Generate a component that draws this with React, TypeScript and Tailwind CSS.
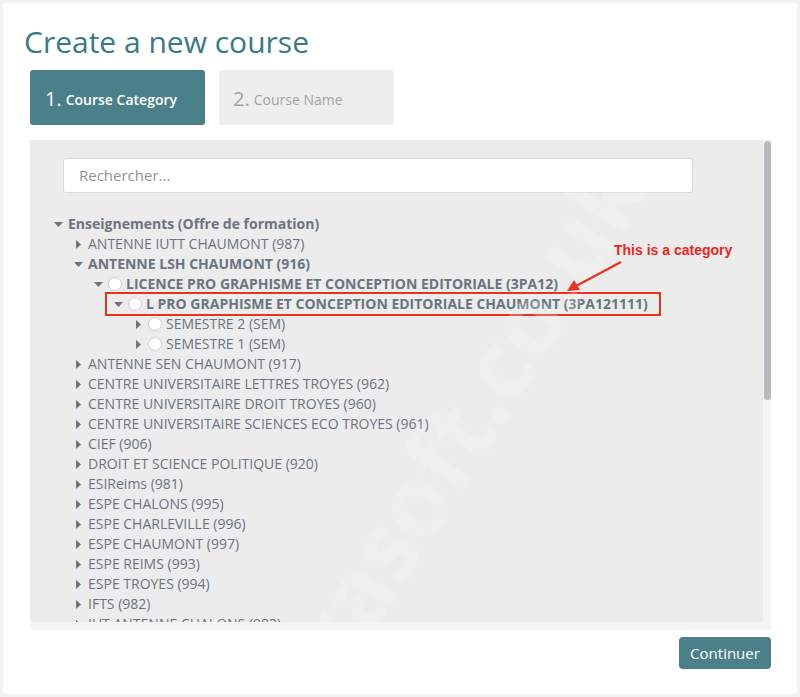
import React from "react";

type Row = {
  level: number;
  open: boolean;
  radio?: boolean;
  bold?: boolean;
  boxed?: boolean;
  label: string;
};

const rows: Row[] = [
  { level: 0, open: true, bold: true, label: "Enseignements (Offre de formation)" },
  { level: 1, open: false, label: "ANTENNE IUTT CHAUMONT (987)" },
  { level: 1, open: true, bold: true, label: "ANTENNE LSH CHAUMONT (916)" },
  { level: 2, open: true, radio: true, bold: true, label: "LICENCE PRO GRAPHISME ET CONCEPTION EDITORIALE (3PA12)" },
  { level: 3, open: true, radio: true, bold: true, boxed: true, label: "L PRO GRAPHISME ET CONCEPTION EDITORIALE CHAUMONT (3PA121111)" },
  { level: 4, open: false, radio: true, label: "SEMESTRE 2 (SEM)" },
  { level: 4, open: false, radio: true, label: "SEMESTRE 1 (SEM)" },
  { level: 1, open: false, label: "ANTENNE SEN CHAUMONT (917)" },
  { level: 1, open: false, label: "CENTRE UNIVERSITAIRE LETTRES TROYES (962)" },
  { level: 1, open: false, label: "CENTRE UNIVERSITAIRE DROIT TROYES (960)" },
  { level: 1, open: false, label: "CENTRE UNIVERSITAIRE SCIENCES ECO TROYES (961)" },
  { level: 1, open: false, label: "CIEF (906)" },
  { level: 1, open: false, label: "DROIT ET SCIENCE POLITIQUE (920)" },
  { level: 1, open: false, label: "ESIReims (981)" },
  { level: 1, open: false, label: "ESPE CHALONS (995)" },
  { level: 1, open: false, label: "ESPE CHARLEVILLE (996)" },
  { level: 1, open: false, label: "ESPE CHAUMONT (997)" },
  { level: 1, open: false, label: "ESPE REIMS (993)" },
  { level: 1, open: false, label: "ESPE TROYES (994)" },
  { level: 1, open: false, label: "IFTS (982)" },
  { level: 1, open: false, label: "IUT ANTENNE CHALONS (983)" },
];

const padClass: Record<number, string> = {
  0: "pl-[22px]",
  1: "pl-[42px]",
  2: "pl-[62px]",
  3: "pl-[82px]",
  4: "pl-[102px]",
};

function Caret({ open }: { open: boolean }) {
  return (
    <span className="w-[12px] h-[20px] flex items-center justify-center shrink-0">
      {open ? (
        <svg width="9" height="5" viewBox="0 0 9 5">
          <path d="M0 0 L9 0 L4.5 5 Z" fill="#6b7480" />
        </svg>
      ) : (
        <svg width="5" height="9" viewBox="0 0 5 9">
          <path d="M0 0 L5 4.5 L0 9 Z" fill="#6b7480" />
        </svg>
      )}
    </span>
  );
}

function TreeRow({ row }: { row: Row }) {
  return (
    <div className={`h-[20px] flex items-center ${padClass[row.level]}`}>
      <span className="relative inline-flex items-center">
        {row.boxed && (
          <span className="absolute left-[-7px] right-[-13px] top-[-2px] bottom-[-2px] border-2 border-[#e8311f]" />
        )}
        <Caret open={row.open} />
        {row.radio && (
          <span className="ml-[4px] w-[14px] h-[14px] rounded-full bg-white border border-[#d0d0d0] shrink-0" />
        )}
        <span
          className={`${row.radio ? "ml-[4px]" : "ml-[4px]"} whitespace-nowrap text-[14px] leading-[20px] text-[#6b7480] ${
            row.bold ? "font-bold" : "font-normal"
          }`}
        >
          {row.label}
        </span>
      </span>
    </div>
  );
}

export default function App() {
  return (
    <div
      className="w-[800px] h-[697px] bg-[#f1f2f4] p-[3px]"
      style={{ fontFamily: '"Open Sans", "Noto Sans", sans-serif' }}
    >
      <div className="w-[794px] h-[691px] bg-white rounded-[3px] flex flex-col pl-[27px] pr-[26px]">
        <h1 className="text-[30px] leading-[36px] font-normal text-[#387a85] mt-[21px] ml-[-6px]">
          Create a new course
        </h1>
        <div className="flex gap-[14px] mt-[10px]">
          <div className="w-[175px] h-[55px] rounded-[3px] bg-[#4b7f8a] flex items-center pl-[15px] pt-[2px] text-white">
            <span className="text-[20px] leading-none">1.</span>
            <span className="text-[14px] leading-none ml-[4px] mt-[2px] font-semibold">Course Category</span>
          </div>
          <div className="w-[175px] h-[55px] rounded-[3px] bg-[#eeeeee] flex items-center pl-[14px] pt-[2px] text-[#a3a3a3]">
            <span className="text-[20px] leading-none">2.</span>
            <span className="text-[14px] leading-none ml-[4px] mt-[2px]">Course Name</span>
          </div>
        </div>

        <div className="mt-[15px] w-[741px] h-[490px] bg-[#f4f4f4] relative overflow-hidden flex">
          <div className="w-[733px] h-[482px] bg-[#ececec] overflow-hidden flex flex-col relative">
            <div className="pl-[33px] pt-[18px]">
              <div className="w-[630px] h-[35px] bg-white border border-[#d9d9d9] rounded-[3px] flex items-center pl-[15px] text-[15px] text-[#8d949c]">
                Rechercher...
              </div>
            </div>
            <div className="mt-[21px] flex flex-col">
              {rows.map((r, i) => (
                <TreeRow key={i} row={r} />
              ))}
            </div>
            <div
              className="absolute left-[60px] top-[250px] text-[96px] font-bold text-white/20 whitespace-nowrap rotate-[-58deg] origin-center pointer-events-none select-none"
              aria-hidden="true"
            >
              parasoft.co.uk
            </div>
            <div
              className="absolute left-[584px] top-[100px] text-[14px] font-bold text-[#e8271b] whitespace-nowrap"
              style={{ fontFamily: '"Liberation Sans", Arial, sans-serif' }}
            >
              This is a category
            </div>
            <svg className="absolute left-[530px] top-[118px]" width="70" height="40" viewBox="0 0 70 40">
              <line x1="61" y1="4" x2="16" y2="28" stroke="#e8311f" strokeWidth="2" />
              <path d="M7 33 L14 22 L20 32 Z" fill="#e8311f" />
            </svg>
          </div>
          <div className="w-[8px] h-[482px] bg-[#f4f4f4] pt-[1px] flex justify-center">
            <div className="w-[7px] h-[259px] rounded-full bg-[#b9babe]" />
          </div>
        </div>

        <div className="flex justify-end mt-[7px]">
          <button className="w-[92px] h-[32px] rounded-[4px] bg-[#4b7f8a] text-white text-[15px] leading-none">
            Continuer
          </button>
        </div>
      </div>
    </div>
  );
}
